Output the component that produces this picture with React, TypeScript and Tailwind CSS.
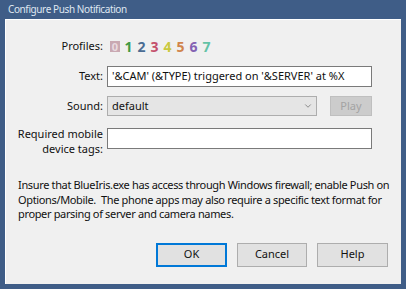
import React from "react";
import { ChevronDown } from "lucide-react";

const profileColors = [
  "text-[#3f9a45]",
  "text-[#4a6c93]",
  "text-[#c4506c]",
  "text-[#c9c93e]",
  "text-[#d0844a]",
  "text-[#8462b3]",
  "text-[#63c2a6]",
];

const App = () => {
  return (
    <div
      className="w-[406px] h-[289px] bg-[#3f5d87] flex flex-col text-[11px] text-[#111]"
      style={{ fontFamily: '"Noto Sans", "Open Sans", sans-serif' }}>
      {/* TITLE BAR */}
      <div className="h-[19px] pl-[8px] leading-[19px] text-[#dfe7f1] text-[10px] tracking-[-0.4px]">
        Configure Push Notification
      </div>

      {/* CONTENT */}
      <div className="flex-1 ml-[5px] mr-[5px] mb-[5px] bg-[#f0f0f0] border-t border-l border-white flex flex-col">
        {/* PROFILES */}
        <div className="flex items-center mt-[19px] h-[14px]">
          <span className="w-[97px] text-right">Profiles:</span>
          <div className="flex items-center ml-[7px] font-bold text-[14px]">
            <span className="w-[10px] h-[11px] bg-[#c9a9b2] text-[#e9dbe0] flex items-center justify-center text-[11px] mr-[2px] leading-none">
              0
            </span>
            {profileColors.map((c, i) => (
              <span key={i} className={`w-[13px] text-center ${c}`}>
                {i + 1}
              </span>
            ))}
          </div>
        </div>

        {/* TEXT */}
        <div className="flex items-center mt-[13px]">
          <span className="w-[97px] text-right">Text:</span>
          <div className="ml-[4px] w-[265px] h-[21px] bg-white border border-[#7a7a7a] flex items-center px-[4px] whitespace-nowrap overflow-hidden">
            '&CAM' (&TYPE) triggered on '&SERVER' at %X
          </div>
        </div>

        {/* SOUND */}
        <div className="flex items-center mt-[9px]">
          <span className="w-[97px] text-right">Sound:</span>
          <div className="ml-[4px] w-[210px] h-[20px] bg-[#e5e5e5] border border-[#adadad] flex items-center justify-between pl-[4px] pr-[3px]">
            <span>default</span>
            <ChevronDown className="w-[10px] h-[10px] text-[#555]" strokeWidth={1.5} />
          </div>
          <div className="ml-[13px] w-[42px] h-[20px] bg-[#cccccc] border border-[#bfbfbf] text-[#a3a3a3] flex items-center justify-center">
            Play
          </div>
        </div>

        {/* TAGS */}
        <div className="flex items-center mt-[10px]">
          <span className="w-[97px] text-right leading-[15px] whitespace-nowrap">
            Required mobile
            <br />
            device tags:
          </span>
          <div className="ml-[4px] w-[265px] h-[21px] bg-white border border-[#7a7a7a] mt-[-6px]" />
        </div>

        {/* NOTE */}
        <p className="mt-[22px] ml-[12px] leading-[14.5px] whitespace-nowrap tracking-[-0.35px]">
          Insure that BlueIris.exe has access through Windows firewall; enable Push on
          <br />
          Options/Mobile.&nbsp; The phone apps may also require a specific text format for
          <br />
          proper parsing of server and camera names.
        </p>

        {/* BUTTONS */}
        <div className="flex justify-end mt-[21px] mr-[13px] gap-[10px]">
          <button
            type="button"
            className="w-[71px] h-[24px] bg-[#e1e1e1] border border-[#0078d7] shadow-[inset_0_0_0_1px_#0078d7]">
            OK
          </button>
          <button type="button" className="w-[70px] h-[24px] bg-[#e1e1e1] border border-[#adadad]">
            Cancel
          </button>
          <button type="button" className="w-[71px] h-[24px] bg-[#e1e1e1] border border-[#adadad]">
            Help
          </button>
        </div>
      </div>
    </div>
  );
};

export default App;
